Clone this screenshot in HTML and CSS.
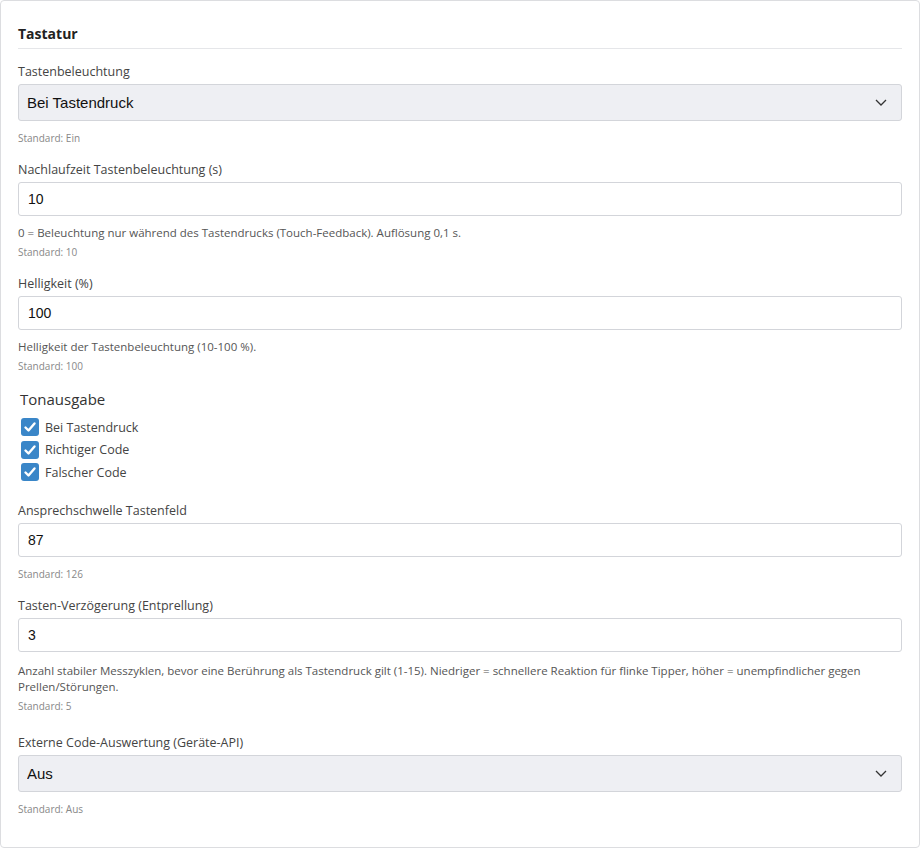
FILE: index.html
```html
<!DOCTYPE html>
<html lang="de">
<head>
    <meta charset="UTF-8">
    <meta name="viewport" content="width=device-width, initial-scale=1.0">
    <title>Tastatur</title>
    <link rel="stylesheet" href="styles.css">
</head>
<body>
    <div class="card">
        <h2 class="section-title">Tastatur</h2>

        <div class="field">
            <label class="field-label" for="keyLight">Tastenbeleuchtung</label>
            <div class="select-wrap">
                <select id="keyLight" class="form-select">
                    <option>Bei Tastendruck</option>
                    <option>Ein</option>
                    <option>Aus</option>
                </select>
                <svg class="chevron" viewBox="0 0 12 7"><path d="M1 1l5 5 5-5"></path></svg>
            </div>
            <div class="hints">
                <div class="default">Standard: Ein</div>
            </div>
        </div>

        <div class="field">
            <label class="field-label" for="afterglow">Nachlaufzeit Tastenbeleuchtung (s)</label>
            <input id="afterglow" class="form-input" type="text" value="10">
            <div class="hints">
                <div class="help">0 = Beleuchtung nur während des Tastendrucks (Touch-Feedback). Auflösung 0,1 s.</div>
                <div class="default">Standard: 10</div>
            </div>
        </div>

        <div class="field">
            <label class="field-label" for="brightness">Helligkeit (%)</label>
            <input id="brightness" class="form-input" type="text" value="100">
            <div class="hints">
                <div class="help">Helligkeit der Tastenbeleuchtung (10-100 %).</div>
                <div class="default">Standard: 100</div>
            </div>
        </div>

        <div class="field field-checks">
            <div class="group-title">Tonausgabe</div>
            <label class="check"><span class="box"><svg viewBox="0 0 16 16"><path d="M3.5 8.5l3 3 6-7"></path></svg></span>Bei Tastendruck</label>
            <label class="check"><span class="box"><svg viewBox="0 0 16 16"><path d="M3.5 8.5l3 3 6-7"></path></svg></span>Richtiger Code</label>
            <label class="check"><span class="box"><svg viewBox="0 0 16 16"><path d="M3.5 8.5l3 3 6-7"></path></svg></span>Falscher Code</label>
        </div>

        <div class="field">
            <label class="field-label" for="threshold">Ansprechschwelle Tastenfeld</label>
            <input id="threshold" class="form-input" type="text" value="87">
            <div class="hints">
                <div class="default">Standard: 126</div>
            </div>
        </div>

        <div class="field field-long">
            <label class="field-label" for="debounce">Tasten-Verzögerung (Entprellung)</label>
            <input id="debounce" class="form-input" type="text" value="3">
            <div class="hints">
                <div class="help">Anzahl stabiler Messzyklen, bevor eine Berührung als Tastendruck gilt (1-15). Niedriger = schnellere Reaktion für flinke Tipper, höher = unempfindlicher gegen Prellen/Störungen.</div>
                <div class="default">Standard: 5</div>
            </div>
        </div>

        <div class="field">
            <label class="field-label" for="extCode">Externe Code-Auswertung (Geräte-API)</label>
            <div class="select-wrap">
                <select id="extCode" class="form-select">
                    <option>Aus</option>
                    <option>Ein</option>
                </select>
                <svg class="chevron" viewBox="0 0 12 7"><path d="M1 1l5 5 5-5"></path></svg>
            </div>
            <div class="hints">
                <div class="default">Standard: Aus</div>
            </div>
        </div>
    </div>
</body>
</html>
```

FILE: styles.css
```css
* {
    margin: 0;
    padding: 0;
    box-sizing: border-box;
}

body {
    font-family: 'Segoe UI', 'Open Sans', sans-serif;
    color: #333;
    background-color: #fff;
}

.card {
    height: 848px;
    border: 1px solid #dcdde0;
    border-radius: 4px;
    padding: 23px 17px 0 17px;
    background-color: #fff;
}

.section-title {
    font-size: 14px;
    font-weight: 700;
    line-height: 20px;
    color: #222;
    padding-bottom: 4px;
    border-bottom: 1px solid #e5e6e9;
    margin-bottom: 14px;
}

.field {
    margin-bottom: 16px;
}

.field-label {
    display: block;
    font-size: 12.5px;
    line-height: 18px;
    color: #444;
    margin-bottom: 3px;
}

.select-wrap {
    position: relative;
}

.form-select {
    appearance: none;
    -webkit-appearance: none;
    width: 100%;
    height: 37px;
    padding: 0 30px 0 8px;
    font-family: 'Liberation Sans', Arial, sans-serif;
    font-size: 15px;
    color: #111;
    background-color: #eeeff3;
    border: 1px solid #d3d5da;
    border-radius: 3px;
    outline: none;
}

.chevron {
    position: absolute;
    right: 15px;
    top: 15px;
    width: 12px;
    height: 7px;
    fill: none;
    stroke: #333;
    stroke-width: 1.3;
    pointer-events: none;
}

.form-input {
    display: block;
    width: 100%;
    height: 34px;
    padding: 0 9px;
    font-family: 'Liberation Sans', Arial, sans-serif;
    font-size: 14px;
    color: #111;
    background-color: #fff;
    border: 1px solid #d3d5da;
    border-radius: 3px;
    outline: none;
}

.hints {
    padding-top: 9px;
}

.help {
    font-size: 11.5px;
    line-height: 16px;
    color: #555;
}

.default {
    font-size: 10px;
    line-height: 14px;
    color: #888;
    margin-top: 4px;
}

.hints .default:first-child {
    margin-top: 1px;
}

.field-long {
    margin-bottom: 21px;
}

.field-long .help {
    margin-top: 2px;
}

.field-checks {
    margin-bottom: 18px;
}

.group-title {
    font-size: 15px;
    line-height: 20px;
    color: #333;
    padding-left: 2px;
    margin-bottom: 7px;
}

.check {
    display: flex;
    align-items: center;
    height: 22.5px;
    padding-left: 3px;
    font-size: 12.5px;
    color: #444;
}

.box {
    width: 18px;
    height: 18px;
    border-radius: 3px;
    background-color: #3a86c8;
    margin-right: 6px;
    display: flex;
    justify-content: center;
    align-items: center;
}

.box svg {
    width: 16px;
    height: 16px;
    fill: none;
    stroke: #fff;
    stroke-width: 2.4;
    stroke-linecap: round;
    stroke-linejoin: round;
}
```
